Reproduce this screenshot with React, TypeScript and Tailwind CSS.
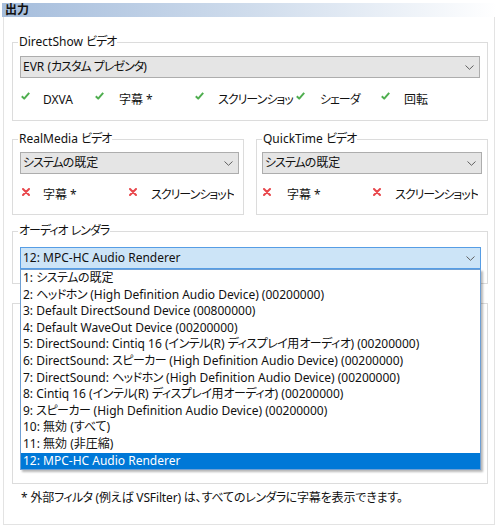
import React from 'react'

const FONT = "font-['Noto_Sans','Noto_Sans_CJK_JP',sans-serif] [font-feature-settings:'palt']"

const AUDIO_DEVICES = [
  '1: システムの既定',
  '2: ヘッドホン (High Definition Audio Device) (00200000)',
  '3: Default DirectSound Device (00800000)',
  '4: Default WaveOut Device (00200000)',
  '5: DirectSound: Cintiq 16 (インテル(R) ディスプレイ用オーディオ) (00200000)',
  '6: DirectSound: スピーカー (High Definition Audio Device) (00200000)',
  '7: DirectSound: ヘッドホン (High Definition Audio Device) (00200000)',
  '8: Cintiq 16 (インテル(R) ディスプレイ用オーディオ) (00200000)',
  '9: スピーカー (High Definition Audio Device) (00200000)',
  '10: 無効 (すべて)',
  '11: 無効 (非圧縮)',
  '12: MPC-HC Audio Renderer',
]

// katakana in the reference font (Yu Gothic UI) runs narrower than Noto CJK, tighten those runs
function J({ t, k = 'tracking-[-1px]' }: { t: string; k?: string }) {
  const parts = t.split(/([\u30a0-\u30ff]+)/)
  return (
    <>
      {parts.map((p, i) =>
        i % 2 ? (
          <span key={i} className={k}>
            {p}
          </span>
        ) : (
          p
        ),
      )}
    </>
  )
}

function Check() {
  return (
    <svg width="9" height="8" viewBox="0 0 9 8" className="shrink-0 mt-[2px]">
      <path d="M0.8 4.2 L3.2 6.6 L8.2 0.9" fill="none" stroke="#4fae4f" strokeWidth="2" strokeLinejoin="round" />
    </svg>
  )
}

function Cross() {
  return (
    <svg width="8" height="8" viewBox="0 0 8 8" className="shrink-0 mt-[3px]">
      <path d="M1 1 L7 7 M7 1 L1 7" fill="none" stroke="#e8474c" strokeWidth="2" strokeLinecap="round" />
    </svg>
  )
}

function Chevron() {
  return (
    <svg width="9" height="5" viewBox="0 0 9 5" className="shrink-0">
      <path d="M0.5 0.5 L4.5 4.3 L8.5 0.5" fill="none" stroke="#606060" strokeWidth="1" />
    </svg>
  )
}

function Select({ value, open }: { value: string; open?: boolean }) {
  return (
    <div
      className={`flex h-[22px] items-center justify-between pl-[2px] pr-[5px] border ${
        open ? 'bg-[#cce4f7] border-[#569de5]' : 'bg-[#e5e5e5] border-[#adadad]'
      }`}
    >
      <span className="leading-[16px] whitespace-nowrap">
        <J t={value} />
      </span>
      <Chevron />
    </div>
  )
}

function GroupBox({ label, className, children }: { label?: string; className?: string; children?: React.ReactNode }) {
  return (
    <div className={`relative border border-[#dcdcdc] ${className ?? ''}`}>
      {label && (
        <span className="absolute -top-[9px] left-[5px] bg-white px-[1px] leading-[16px] whitespace-nowrap">
          <J t={label} />
        </span>
      )}
      {children}
    </div>
  )
}

function Feature({ ok, text, width, gap }: { ok: boolean; text: string; width?: string; gap: string }) {
  return (
    <div className={`flex shrink-0 items-start overflow-hidden ${width ?? ''}`}>
      {ok ? <Check /> : <Cross />}
      <span className={`leading-[16px] mt-[2px] whitespace-nowrap ${gap}`}>
        <J t={text} />
      </span>
    </div>
  )
}

export default function App() {
  return (
    <div className={`w-[499px] h-[527px] bg-white text-[12px] text-[#111] ${FONT} relative overflow-hidden`}>
      <div className="mx-[2px] mt-[3px] h-[14px] flex items-center pl-[3px] bg-linear-to-r from-[#a5bddc] via-[#cfdcec] to-[#ffffff] font-bold leading-[14px]">
        出力
      </div>

      <div className="ml-[3px] w-[492px] h-[508px] border-x border-b border-[#e3e3e3] pl-[8px] pr-[6px] pt-[25px]">
        <GroupBox label="DirectShow ビデオ" className="h-[79px] pt-[13px] px-[7px]">
          <Select value="EVR (カスタム プレゼンタ)" />
          <div className="flex mt-[12px] pl-[1px]">
            <Feature ok text="DXVA" width="w-[74px]" gap="ml-[13px]" />
            <Feature ok text="字幕 *" width="w-[100px]" gap="ml-[15px]" />
            <Feature ok text="スクリーンショッ" width="w-[101px]" gap="ml-[14px]" />
            <Feature ok text="シェーダ" width="w-[85px]" gap="ml-[15px]" />
            <Feature ok text="回転" gap="ml-[14px]" />
          </div>
        </GroupBox>

        <div className="flex gap-[12px] mt-[18px]">
          <GroupBox label="RealMedia ビデオ" className="w-[232px] h-[76px] pt-[12px] pl-[7px] pr-[4px]">
            <Select value="システムの既定" />
            <div className="flex mt-[11px] pl-[2px]">
              <Feature ok={false} text="字幕 *" width="w-[107px]" gap="ml-[13px]" />
              <Feature ok={false} text="スクリーンショット" gap="ml-[14px]" />
            </div>
          </GroupBox>
          <GroupBox label="QuickTime ビデオ" className="w-[232px] h-[76px] pt-[12px] px-[5px]">
            <Select value="システムの既定" />
            <div className="flex mt-[11px] pl-[1px]">
              <Feature ok={false} text="字幕 *" width="w-[110px]" gap="ml-[16px]" />
              <Feature ok={false} text="スクリーンショット" gap="ml-[14px]" />
            </div>
          </GroupBox>
        </div>

        <GroupBox label="オーディオ レンダラ" className="mt-[16px] h-[53px] pt-[15px] pl-[7px] pr-[6px]">
          <Select value="12: MPC-HC Audio Renderer" open />
        </GroupBox>

        <GroupBox className="mt-[19px] h-[181px]" />

        <p className="mt-[6px] pl-[9px] leading-[16px] whitespace-nowrap tracking-[-0.15px]">
          <J t="* 外部フィルタ (例えば VSFilter) は、すべてのレンダラに字幕を表示できます。" k="tracking-[-0.6px]" />
        </p>
      </div>

      <ul className="absolute left-[20px] top-[269px] w-[461px] bg-white border border-[#6f9fd3] shadow-[2px_2px_2px_rgba(0,0,0,0.28)]">
        {AUDIO_DEVICES.map((d, i) => (
          <li
            key={d}
            className={`h-[16.6px] leading-[16.6px] pl-[2px] whitespace-nowrap ${
              i === AUDIO_DEVICES.length - 1 ? 'bg-[#0078d7] text-white' : ''
            }`}
          >
            <J t={d} k="tracking-[-0.5px]" />
          </li>
        ))}
      </ul>
    </div>
  )
}
